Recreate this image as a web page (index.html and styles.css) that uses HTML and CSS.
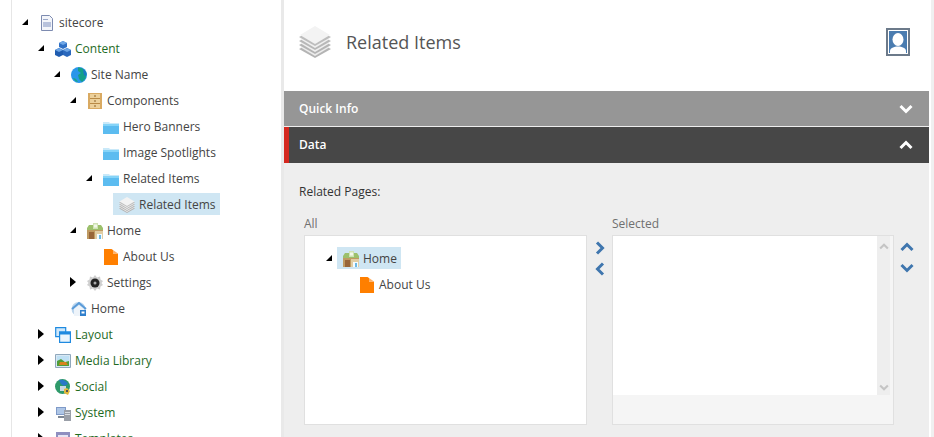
FILE: index.html
```html
<!DOCTYPE html>
<html lang="en">
<head>
<meta charset="utf-8">
<title>Related Items</title>
<link rel="stylesheet" href="styles.css">
</head>
<body>
<svg class="sprite" aria-hidden="true">
  <defs>
    <symbol id="folder" viewBox="0 0 16 16">
      <path d="M0 3h6l1 1h9v1H0z" fill="#c9e9f9"/>
      <path d="M0 5h16v10H0z" fill="#5cbcf0"/>
      <path d="M0 5h16v2H0z" fill="#86d4f8"/>
    </symbol>
    <symbol id="page" viewBox="0 0 16 16">
      <path d="M1 0h7.500l1.500 1v3.500h5V16H1z" fill="#ff7f00"/>
      <path d="M10 1l5 3.500h-5z" fill="#ffb066"/>
    </symbol>
    <symbol id="layers" viewBox="0 0 32 32">
      <path d="M16 15 32 23 16 32 0 23z" fill="#b4b4b4"/>
      <path d="M16 13 31 21 16 30 1 21z" fill="#ececec"/>
      <path d="M16 11 32 19 16 28 0 19z" fill="#b4b4b4"/>
      <path d="M16 9 31 17 16 26 1 17z" fill="#efefef"/>
      <path d="M16 7 32 15 16 24 0 15z" fill="#b8b8b8"/>
      <path d="M16 5 31 13 16 22 1 13z" fill="#f0f0f0"/>
      <path d="M16 3 32 11 16 20 0 11z" fill="#bdbdbd"/>
      <path d="M16 0 31 9 16 18 1 9z" fill="#f3f3f3"/>
    </symbol>
    <symbol id="house" viewBox="0 0 16 16">
      <path d="M0 5h16v11H0z" fill="#bf9a62"/>
      <path d="M0 5 2 2h12l2 3v2H0z" fill="#9cc06c"/>
      <path d="M6 0h5v6H6z" fill="#cfe3b4"/>
      <path d="M7 1.500h3v3H7z" fill="#f2f8ea"/>
      <path d="M2 9h5v7H2z" fill="#98663a"/>
      <path d="M8 8h8v8H8z" fill="#e0cda4"/>
      <path d="M10 11h5v5h-5z" fill="#f4fbff"/>
      <path d="M12 12h2v4h-2z" fill="#6cb8e4"/>
    </symbol>
    <symbol id="tri-open" viewBox="0 0 8 8">
      <path d="M7 1v6H1z" fill="#000"/>
    </symbol>
    <symbol id="tri-closed" viewBox="0 0 8 12">
      <path d="M1 1l6 5-6 5z" fill="#000"/>
    </symbol>
    <symbol id="chev-up" viewBox="0 0 14 10">
      <path d="M1.500 8 7 2.500 12.500 8" fill="none" stroke="currentColor" stroke-width="3"/>
    </symbol>
    <symbol id="chev-down" viewBox="0 0 14 10">
      <path d="M1.500 2 7 7.500 12.500 2" fill="none" stroke="currentColor" stroke-width="3"/>
    </symbol>
    <symbol id="chev-right" viewBox="0 0 10 14">
      <path d="M2 1.500 7.500 7 2 12.500" fill="none" stroke="currentColor" stroke-width="3"/>
    </symbol>
    <symbol id="chev-left" viewBox="0 0 10 14">
      <path d="M8 1.500 2.500 7 8 12.500" fill="none" stroke="currentColor" stroke-width="3"/>
    </symbol>
  </defs>
</svg>

<div class="app">
  <nav class="sidebar">
    <ul class="tree">
      <li>
        <div class="row"><span class="toggle"><svg class="tri"><use href="#tri-open"/></svg></span><span class="label"><svg class="icon" viewBox="0 0 16 16"><path d="M2.500.500h8l3 3v12h-11z" fill="#f3f5fa" stroke="#7d8bb0"/><path d="M4 7h8v5H4z" fill="#b8c2dc"/><path d="M4 4h5v1H4z" fill="#9aa7c8"/></svg>sitecore</span></div>
        <ul>
          <li>
            <div class="row"><span class="toggle"><svg class="tri"><use href="#tri-open"/></svg></span><span class="label db"><svg class="icon" viewBox="0 0 16 16"><path d="M8 0l4 2v4L8 8 4 6V2z" fill="#2f6fc4"/><path d="M4 7l4 2v5l-4 2-4-2V9z" fill="#1f5cb0"/><path d="M12 7l4 2v5l-4 2-4-2V9z" fill="#2a68bd"/><path d="M4 2l4 2 4-2-4-2zM0 9l4 2 4-2-4-2zM8 9l4 2 4-2-4-2z" fill="#6ea6e6"/></svg>Content</span></div>
            <ul>
              <li>
                <div class="row"><span class="toggle"><svg class="tri"><use href="#tri-open"/></svg></span><span class="label"><svg class="icon" viewBox="0 0 16 16"><circle cx="8" cy="8" r="8" fill="#2a96ea"/><path d="M7 .500c4-.5 8 3 8.500 6l-1 5-3.500 3.500-3-3-1-4 3-2-3-2z" fill="#15a088"/><path d="M12 2c2 1.500 3.500 3.500 3.500 6l-2 1-1-3z" fill="#1a78c8"/><path d="M2 11c2 0 4 1.500 5 4-2 0-4-2-5-4z" fill="#18a88a"/></svg>Site Name</span></div>
                <ul>
                  <li>
                    <div class="row"><span class="toggle"><svg class="tri"><use href="#tri-open"/></svg></span><span class="label"><svg class="icon" viewBox="0 0 16 16"><path d="M1 0h14v16H1z" fill="#d9aa62"/><path d="M3 1h10v14H3z" fill="#ecd09a"/><path d="M3 5h10v1H3zM3 10h10v1H3z" fill="#b98a45"/><path d="M7 2.500h2v1H7zM7 7.500h2v1H7zM7 12.500h2v1H7z" fill="#8a6028"/></svg>Components</span></div>
                    <ul>
                      <li><div class="row"><span class="toggle"></span><span class="label"><svg class="icon"><use href="#folder"/></svg>Hero Banners</span></div></li>
                      <li><div class="row"><span class="toggle"></span><span class="label"><svg class="icon"><use href="#folder"/></svg>Image Spotlights</span></div></li>
                      <li>
                        <div class="row"><span class="toggle"><svg class="tri"><use href="#tri-open"/></svg></span><span class="label"><svg class="icon"><use href="#folder"/></svg>Related Items</span></div>
                        <ul>
                          <li><div class="row"><span class="toggle"></span><span class="label selected"><svg class="icon"><use href="#layers"/></svg>Related Items</span></div></li>
                        </ul>
                      </li>
                    </ul>
                  </li>
                  <li>
                    <div class="row"><span class="toggle"><svg class="tri"><use href="#tri-open"/></svg></span><span class="label"><svg class="icon"><use href="#house"/></svg>Home</span></div>
                    <ul>
                      <li><div class="row"><span class="toggle"></span><span class="label"><svg class="icon"><use href="#page"/></svg>About Us</span></div></li>
                    </ul>
                  </li>
                  <li><div class="row"><span class="toggle"><svg class="tri-c"><use href="#tri-closed"/></svg></span><span class="label"><svg class="icon" viewBox="0 0 16 16"><path d="M8 0l2 2.500 3-1 .5 3 2.500 1.500-1.500 2 1.500 2-2.500 1.500-.5 3-3-1L8 16l-2-2.500-3 1-.5-3L0 10l1.500-2L0 6l2.500-1.500.5-3 3 1z" fill="#cfcfcf"/><circle cx="8" cy="8" r="4.500" fill="#222"/><circle cx="8" cy="8" r="1.500" fill="#aaa"/></svg>Settings</span></div></li>
                </ul>
              </li>
              <li><div class="row"><span class="toggle"></span><span class="label"><svg class="icon" viewBox="0 0 16 16"><circle cx="7.500" cy="8" r="7" fill="#bcd6ee"/><path d="M1 8l7-6 7 6" fill="none" stroke="#5a9bd8" stroke-width="2"/><path d="M3 8l5-4 5 4v7H3z" fill="#eef4fa"/><path d="M9 9h6v6H9z" fill="#2f7fcc"/><path d="M10.500 10.500h3v2h-3z" fill="#fff"/></svg>Home</span></div></li>
            </ul>
          </li>
          <li><div class="row"><span class="toggle"><svg class="tri-c"><use href="#tri-closed"/></svg></span><span class="label db"><svg class="icon" viewBox="0 0 16 16"><path d="M.700.700h10v9h-10z" fill="#cfe8fb" stroke="#1f8ae0" stroke-width="1.200"/><path d="M4.600 5h10.800v10.400H4.600z" fill="#eaf5fd" stroke="#1f8ae0" stroke-width="1.200"/><path d="M4 4.500h12v3H4z" fill="#1f8ae0"/></svg>Layout</span></div></li>
          <li><div class="row"><span class="toggle"><svg class="tri-c"><use href="#tri-closed"/></svg></span><span class="label db"><svg class="icon" viewBox="0 0 16 16"><path d="M.500 1.500h15v13H.500z" fill="#d8e8f4" stroke="#90a8bc"/><path d="M2 3h12v5H2z" fill="#bfe0f4"/><path d="M2 8l4-2 4 3 4-1v5H2z" fill="#4f9e3a"/><path d="M5 9h6l2 3H4z" fill="#d8831e"/></svg>Media Library</span></div></li>
          <li><div class="row"><span class="toggle"><svg class="tri-c"><use href="#tri-closed"/></svg></span><span class="label db"><svg class="icon" viewBox="0 0 16 16"><circle cx="7.500" cy="7.500" r="7.500" fill="#2f9a6a"/><path d="M4 1c4-1 8 1 9 4l-4 2-3-2z" fill="#2a78c8"/><path d="M5 7h6v5H5z" fill="#c9d8e2"/><path d="M9 10l3-1 3 3-2 4-4-2z" fill="#e2b93c"/><path d="M11 11h2v2h-2z" fill="#555"/></svg>Social</span></div></li>
          <li><div class="row"><span class="toggle"><svg class="tri-c"><use href="#tri-closed"/></svg></span><span class="label db"><svg class="icon" viewBox="0 0 16 16"><path d="M1 2h10v8H1z" fill="#7f9ac8"/><path d="M2 3h8v6H2z" fill="#aec6e6"/><path d="M9 5h7v11H9z" fill="#9a9fa8"/><path d="M10 7h5v1h-5zM10 9h5v1h-5z" fill="#d8dce2"/><path d="M3 11h6v2H3z" fill="#7d8794"/></svg>System</span></div></li>
          <li><div class="row"><span class="toggle"><svg class="tri-c"><use href="#tri-closed"/></svg></span><span class="label db"><svg class="icon" viewBox="0 0 16 16"><path d="M1 1h14v14H1z" fill="#8f8fc0"/><path d="M3 4h10v9H3z" fill="#e6e6f4"/></svg>Templates</span></div></li>
        </ul>
      </li>
    </ul>
  </nav>

  <main class="main">
    <header class="head">
      <svg class="head-icon"><use href="#layers"/></svg>
      <h1 class="title">Related Items</h1>
      <svg class="avatar" viewBox="0 0 24 28"><path d="M0 0h24v28H0z" fill="#6c7a8a"/><path d="M2 2h20v24H2z" fill="#fff"/><path d="M3 3h18v22H3z" fill="#4a7cb0"/><ellipse cx="12" cy="11.500" rx="5.500" ry="6.500" fill="#fff"/><path d="M4 25v-2c0-3 4-4.500 8-4.500s8 1.500 8 4.500v2z" fill="#fff"/></svg>
    </header>

    <div class="bar quick">Quick Info<svg class="bar-chev"><use href="#chev-down"/></svg></div>
    <div class="bar data">Data<svg class="bar-chev"><use href="#chev-up"/></svg></div>

    <section class="panel">
      <p class="field">Related Pages:</p>
      <div class="picker">
        <div class="col">
          <div class="cap">All</div>
          <div class="box all">
            <ul class="tree mini">
              <li>
                <div class="row"><span class="toggle"><svg class="tri"><use href="#tri-open"/></svg></span><span class="label selected"><svg class="icon"><use href="#house"/></svg>Home</span></div>
                <ul>
                  <li><div class="row"><span class="toggle"></span><span class="label"><svg class="icon"><use href="#page"/></svg>About Us</span></div></li>
                </ul>
              </li>
            </ul>
          </div>
        </div>
        <div class="moves mid">
          <svg class="mv-h"><use href="#chev-right"/></svg>
          <svg class="mv-h"><use href="#chev-left"/></svg>
        </div>
        <div class="col">
          <div class="cap">Selected</div>
          <div class="box sel">
            <div class="sel-main">
              <div class="list"></div>
              <div class="scroll">
                <svg class="sb"><use href="#chev-up"/></svg>
                <svg class="sb"><use href="#chev-down"/></svg>
              </div>
            </div>
            <div class="sel-foot"></div>
          </div>
        </div>
        <div class="moves side">
          <svg class="mv-v"><use href="#chev-up"/></svg>
          <svg class="mv-v"><use href="#chev-down"/></svg>
        </div>
      </div>
    </section>
  </main>
  <div class="edge"></div>
</div>
</body>
</html>
```

FILE: styles.css
```css
* { box-sizing: border-box; }
html, body { margin: 0; height: 437px; overflow: hidden; background: #fff; }
body { font-family: "Open Sans", "Liberation Sans", sans-serif; font-size: 12px; color: #444; }
.sprite { position: absolute; width: 0; height: 0; }

.app { display: flex; height: 437px; overflow: hidden; }

.sidebar {
  width: 273px;
  margin-left: 11px;
  border-left: 1px solid #e6e6e6;
  border-right: 3px solid #e9e9e9;
  padding: 9px 0 0 5px;
  background: #fff;
  flex: none;
  overflow: hidden;
}
.tree, .tree ul { list-style: none; margin: 0; padding: 0; }
.tree ul { padding-left: 16px; }
.row { display: flex; align-items: center; height: 26px; white-space: nowrap; }
.toggle { width: 16px; display: flex; justify-content: center; align-items: center; flex: none; }
.tri { width: 8px; height: 8px; }
.tri-c { width: 8px; height: 12px; }
.label { display: flex; align-items: center; height: 22px; padding: 2px 4px 0 6px; line-height: 20px; }
.label.db { color: #1f6b1f; }
.label.selected { background: #cfe6f3; }
.icon { width: 16px; height: 16px; margin-right: 4px; flex: none; }

.main { width: 645px; flex: none; display: flex; flex-direction: column; background: #eee; }
.head { height: 91px; background: #fff; display: flex; align-items: center; padding: 0 19px 7px 15px; }
.head-icon { width: 32px; height: 32px; flex: none; margin-right: 15px; }
.title { margin: 0; flex: 1; font-size: 18px; font-weight: 400; color: #555; }
.avatar { width: 24px; height: 28px; flex: none; }

.bar {
  display: flex; align-items: center; justify-content: space-between;
  color: #fff; font-size: 12px; font-weight: 600;
  padding: 0 16px 0 15px;
}
.quick { height: 35px; background: #969696; }
.data { height: 36px; margin-top: 1px; background: #474747; border-left: 5px solid #d4281f; padding-left: 10px; padding-bottom: 2px; }
.data .bar-chev { margin-top: 2px; }
.bar-chev { width: 14px; height: 10px; color: #fff; }

.panel { flex: 1; padding: 0 0 0 15px; }
.field { margin: 20px 0 0; height: 18px; line-height: 18px; color: #333; }
.picker { display: flex; padding-top: 15px; }
.col { display: flex; flex-direction: column; }
.cap { height: 18px; line-height: 16px; color: #707070; padding-left: 5px; }
.box { height: 190px; border: 1px solid #e0e0e0; margin-top: 1px; }
.all { width: 283px; margin-left: 5px; background: #fff; padding: 9px 0 0 16px; }
.moves { display: flex; flex-direction: column; align-items: center; color: #3f76ae; }
.mid { width: 25px; padding-top: 25px; gap: 7px; }
.mid .mv-h { width: 10px; height: 14px; }
.sel { width: 282px; display: flex; flex-direction: column; background: #f5f5f5; }
.col:nth-child(3) .cap { padding-left: 0; }
.sel-main { height: 159px; display: flex; padding-right: 3px; }
.list { flex: 1; background: #fff; }
.scroll { width: 13px; background: #eee; display: flex; flex-direction: column; justify-content: space-between; align-items: center; padding: 7px 0 4px; color: #c4c4c4; }
.sb { width: 10px; height: 7px; }
.sel-foot { flex: 1; }
.side { width: 26px; padding-top: 26px; gap: 11px; }
.mv-v { width: 14px; height: 10px; }

.edge { flex: 1; background: #fff; border-left: 2px solid #fff; box-shadow: inset 3px 0 0 #f0f0f0; }
```
